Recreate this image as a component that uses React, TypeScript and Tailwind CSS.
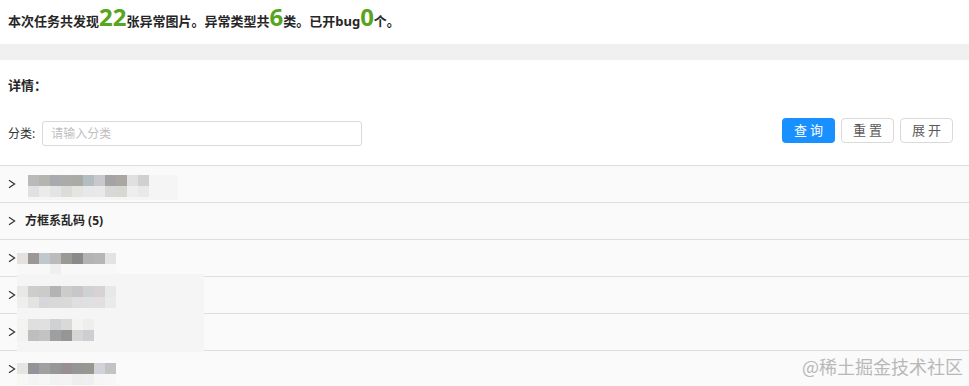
import React from "react";

type MosaicProps = {
  cells: string[][];
  panel?: string;
  className?: string;
};

// pixelated (blurred) picture in a row
function Mosaic({ cells, panel, className = "" }: MosaicProps) {
  return (
    <div className={`relative ${className}`}>
      {panel && <div className={`absolute left-0 ${panel}`} />}
      <div className="relative flex flex-col">
        {cells.map((line, i) => (
          <div key={i} className="flex">
            {line.map((c, j) => (
              <div key={j} className={`w-[11px] h-[11px] ${c}`} />
            ))}
          </div>
        ))}
      </div>
    </div>
  );
}

function Chevron() {
  return (
    <svg width="8" height="10" viewBox="0 0 8 10" className="shrink-0">
      <polyline points="1,1.2 6.6,5 1,8.8" fill="none" stroke="#333" strokeWidth="1.2" />
    </svg>
  );
}

const row1 = [
  ["bg-[#bababa]", "bg-[#b4b4b1]", "bg-[#a9aaae]", "bg-[#ababa9]", "bg-[#a9aba5]", "bg-[#b4bdc1]", "bg-[#c8c9cc]", "bg-[#a4a3a6]", "bg-[#a9a6a3]", "bg-[#e0e0e0]", "bg-[#d0d0d3]"],
  ["bg-[#e1e1e1]", "bg-[#ebebeb]", "bg-[#e3e4e3]", "bg-[#dcdcda]", "bg-[#e4e4e1]", "bg-[#e7e8eb]", "bg-[#e9e9eb]", "bg-[#d8d8d6]", "bg-[#d7d7d4]", "bg-[#eeeeee]", "bg-[#e8e9ea]"],
];
const row3 = [
  ["bg-[#e3e2e0]", "bg-[#9b9796]", "bg-[#c0c8ce]", "bg-[#bdbbba]", "bg-[#9a9994]", "bg-[#8a8a88]", "bg-[#b3b3b1]", "bg-[#b6b6b8]", "bg-[#e3e3e3]"],
  ["bg-[#f8f8f8]", "bg-[#f8f8f8]", "bg-[#f8f8f8]", "bg-[#efefef]", "bg-[#f8f8f8]", "bg-[#f8f8f8]", "bg-[#f8f8f8]", "bg-[#f8f8f8]", "bg-[#f8f8f8]"],
];
const row4 = [
  ["bg-[#e8e8e6]", "bg-[#cdcdcc]", "bg-[#cbcbca]", "bg-[#b4b3b4]", "bg-[#cbcdca]", "bg-[#c7c7c9]", "bg-[#d0d1d3]", "bg-[#d9d2d4]", "bg-[#e7e8e8]"],
  ["bg-[#eeeeec]", "bg-[#e3e3e1]", "bg-[#d8d6da]", "bg-[#d7d8d8]", "bg-[#d9dad8]", "bg-[#dfdfdf]", "bg-[#e0e0e0]", "bg-[#e3dfe1]", "bg-[#e9eaea]"],
];
const row5 = [
  ["bg-[#f3f3f2]", "bg-[#dfdfdf]", "bg-[#e0e0e0]", "bg-[#d0d1d3]", "bg-[#d9d9d8]", "bg-[#f3f3f1]", "bg-[#eeeeee]"],
  ["bg-[#f2f2f0]", "bg-[#bebebe]", "bg-[#c4c3c3]", "bg-[#9e9fa0]", "bg-[#979695]", "bg-[#d6d6d4]", "bg-[#cdced2]"],
];
const row6 = [
  ["bg-[#e6e5e3]", "bg-[#95939a]", "bg-[#9fa1a0]", "bg-[#959799]", "bg-[#978f94]", "bg-[#969595]", "bg-[#959791]", "bg-[#d0d3d8]", "bg-[#c3c3c3]"],
  ["bg-[#f7f7f5]", "bg-[#f4f4f4]", "bg-[#f6f6f6]", "bg-[#f1f2f1]", "bg-[#f3f3f3]", "bg-[#eeeeee]", "bg-[#efefef]", "bg-[#f6f6f6]", "bg-[#f7f7f7]"],
];

const rowCls = "flex items-center h-[37px] border-b border-[#dedede] bg-[#fafafa] pl-[8px]";

export default function App() {
  return (
    <div className="relative w-[969px] h-[386px] overflow-hidden bg-white text-[#262626] font-['Noto_Sans','Noto_Sans_CJK_SC',sans-serif]">
      {/* summary */}
      <div className="h-[44px] px-2 pt-[2px] leading-[30px] text-[13px] font-bold whitespace-nowrap">
        本次任务共发现
        <span className="text-[24px] text-[#57a51c] leading-[30px]">22</span>
        张异常图片。异常类型共
        <span className="text-[24px] text-[#57a51c] leading-[30px]">6</span>
        类。已开bug
        <span className="text-[24px] text-[#57a51c] leading-[30px]">0</span>
        个。
      </div>

      <div className="h-[16px] bg-[#f0f0f0]" />

      <div className="h-[52px] px-2 flex items-center text-[13px] font-bold">详情：</div>

      {/* filter */}
      <div className="h-[54px] flex items-start justify-between pl-2 pr-[16px] border-b border-[#dedede]">
        <div className="flex items-center pt-[9px] text-[12px] text-[#333]">
          <span>分类:</span>
          <input
            placeholder="请输入分类"
            className="ml-[7px] w-[320px] h-[25px] px-[8px] border border-[#d9d9d9] rounded-[3px] text-[12px] outline-none placeholder:text-[#bfbfbf]"
          />
        </div>
        <div className="flex gap-[6px] pt-[6px] text-[13px]">
          <button className="w-[53px] h-[25px] rounded-[4px] bg-[#1890ff] text-white tracking-[3px] pl-[3px]">查询</button>
          <button className="w-[53px] h-[25px] rounded-[4px] border border-[#d9d9d9] bg-white text-[#595959] tracking-[3px] pl-[3px]">重置</button>
          <button className="w-[53px] h-[25px] rounded-[4px] border border-[#d9d9d9] bg-white text-[#595959] tracking-[3px] pl-[3px]">展开</button>
        </div>
      </div>

      {/* groups */}
      <div className={rowCls}>
        <Chevron />
        <Mosaic cells={row1} className="ml-[12px] mt-[4px]" panel="-left-[4px] top-0 w-[150px] h-[25px] bg-[#f5f5f5]" />
      </div>
      <div className={rowCls}>
        <Chevron />
        <span className="ml-[9px] text-[12px] font-bold text-[#262626]">方框系乱码 (5)</span>
      </div>
      <div className={rowCls}>
        <Chevron />
        <Mosaic cells={row3} className="ml-[1px] mt-[11px]" />
      </div>
      <div className={rowCls}>
        <Chevron />
        <Mosaic cells={row4} className="ml-[1px] mt-[3px]" panel="-top-[12px] w-[187px] h-[42px] bg-[#f5f5f5]" />
      </div>
      <div className={rowCls}>
        <Chevron />
        <Mosaic cells={row5} className="ml-[1px] mb-[5px]" panel="-top-[6px] w-[187px] h-[39px] bg-[#f5f5f5]" />
      </div>
      <div className={rowCls}>
        <Chevron />
        <Mosaic cells={row6} className="ml-[1px] mt-[9px]" />
      </div>

      <div className="absolute right-[6px] bottom-[6px] text-[18px] text-[#b8b8b8] font-['Noto_Sans_CJK_SC',sans-serif]">
        @稀土掘金技术社区
      </div>
    </div>
  );
}
